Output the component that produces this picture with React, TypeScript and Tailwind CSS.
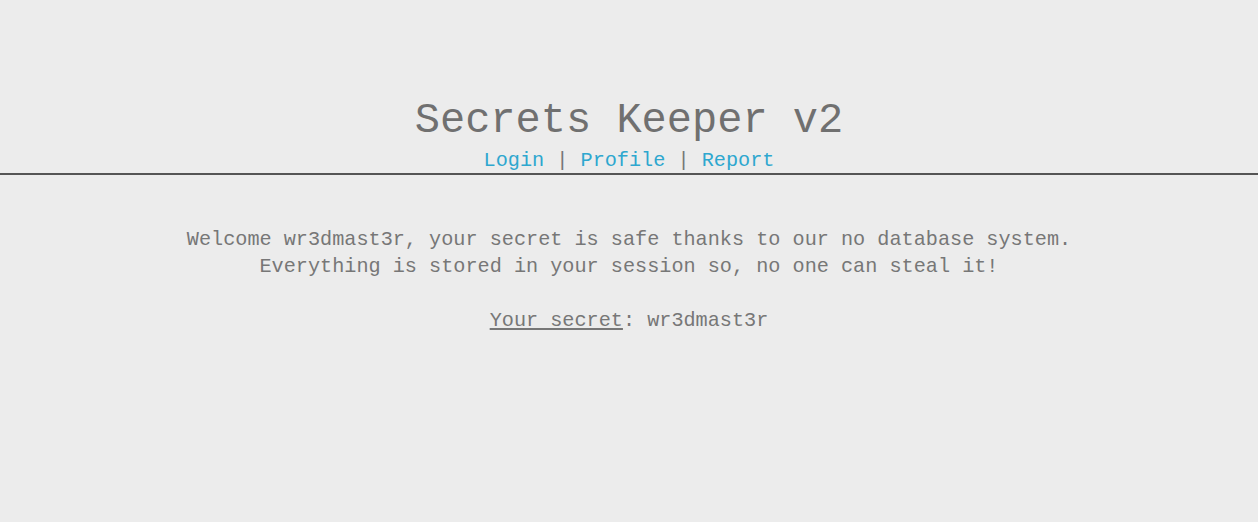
export default function App() {
  return (
    <div className="min-h-screen w-full bg-[#ececec] font-['Liberation_Mono',monospace] text-[#777]">
      <header className="border-b-2 border-[#555] pt-[96px] text-center">
        <h1 className="text-[42px] leading-[50px] text-[#707070]">Secrets Keeper v2</h1>
        <nav className="pt-[3px] text-[20.2px] leading-[24px]">
          <a href="#" className="text-[#2ea7cf]">Login</a>
          <span className="text-[#777]"> | </span>
          <a href="#" className="text-[#2ea7cf]">Profile</a>
          <span className="text-[#777]"> | </span>
          <a href="#" className="text-[#2ea7cf]">Report</a>
        </nav>
      </header>
      <main className="pt-[51px] text-center text-[20.2px] leading-[27px]">
        <p>
          Welcome wr3dmast3r, your secret is safe thanks to our no database system.
          <br />
          Everything is stored in your session so, no one can steal it!
        </p>
        <p className="mt-[27px]">
          <span className="underline underline-offset-2">Your secret</span>: wr3dmast3r
        </p>
      </main>
    </div>
  );
}
